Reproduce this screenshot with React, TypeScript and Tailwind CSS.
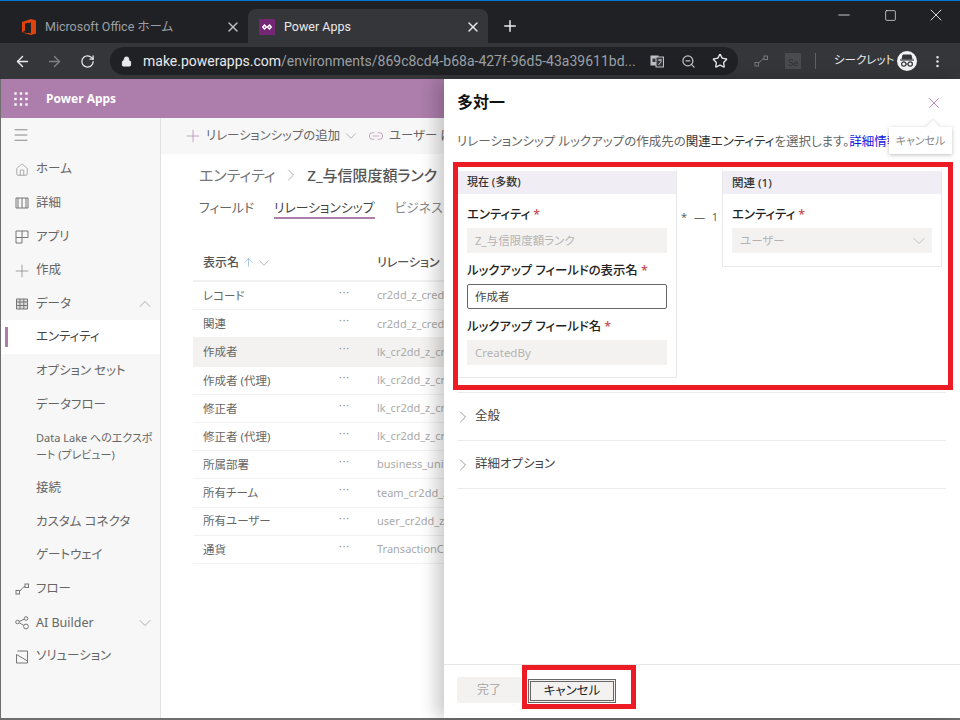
import React from "react"
import { ArrowLeft, ArrowRight, RotateCw, Lock, ZoomOut, Star, Plus, X, Minus, Square, ChevronDown, ChevronUp, ChevronRight, Menu, Home, ArrowUp, Link2, MoreVertical } from "lucide-react"

const sans = "[font-family:'Noto_Sans','Noto_Sans_CJK_JP',sans-serif]"
const chromeFont = "[font-family:Roboto,'Noto_Sans_CJK_JP',sans-serif]"

function Grid9() {
  return (
    <svg width="14" height="14" viewBox="0 0 14 14" fill="#fff">
      {[1.5, 7, 12.5].map((y) =>
        [1.5, 7, 12.5].map((x) => <rect key={`${x}-${y}`} x={x - 1.2} y={y - 1.2} width="2.4" height="2.4" />)
      )}
    </svg>
  )
}

function OfficeLogo() {
  return (
    <svg width="14" height="16" viewBox="0 0 14 16">
      <path d="M0 3 L9 0 L14 1.5 V14.5 L9 16 L0 13.5 L9 14.2 V3.4 L3 4.6 V11.6 L0 13.5 Z" fill="#e0440e" />
    </svg>
  )
}

function PowerAppsLogo() {
  return (
    <div className="flex h-4 w-4 items-center justify-center bg-[#742774]">
      <svg width="10" height="6" viewBox="0 0 10 6" fill="none" stroke="#fff" strokeWidth="1.4">
        <path d="M2.5 1 L4.5 3 L2.5 5 L0.8 3 Z" />
        <path d="M7.5 1 L9.2 3 L7.5 5 L5.5 3 Z" />
      </svg>
    </div>
  )
}

function FlowIcon() {
  return (
    <svg width="14" height="14" viewBox="0 0 14 14" fill="none" stroke="#777" strokeWidth="1">
      <rect x="1" y="8.5" width="3.5" height="3.5" />
      <rect x="10" y="2" width="3.5" height="3.5" />
      <path d="M4.5 9 C7 8 7 5 10 4.5" />
    </svg>
  )
}

function AiIcon() {
  return (
    <svg width="14" height="14" viewBox="0 0 14 14" fill="none" stroke="#777" strokeWidth="1">
      <circle cx="2.5" cy="6" r="1.8" />
      <circle cx="11" cy="2.5" r="1.8" />
      <circle cx="11" cy="10.5" r="2.4" />
      <path d="M4.3 5.4 L9.4 3.2 M4.3 6.8 L8.8 9.4" />
    </svg>
  )
}

function SolutionIcon() {
  return (
    <svg width="14" height="14" viewBox="0 0 14 14" fill="none" stroke="#777" strokeWidth="1">
      <path d="M2.5 1 H12.5 V13 H1.5 V4.5 L12.5 11" />
    </svg>
  )
}

function AppIcon() {
  return (
    <svg width="14" height="14" viewBox="0 0 14 14" fill="none" stroke="#777" strokeWidth="1">
      <path d="M1 1 H13 V7.5 H7 V13 H1 Z M7 1 V7.5 M1 7.5 H7" />
    </svg>
  )
}

function BookIcon() {
  return (
    <svg width="14" height="14" viewBox="0 0 14 14" fill="none" stroke="#777" strokeWidth="1">
      <path d="M1 2 H13 V12 H1 Z M7 2 V12 M3 2 V12 M11 2 V12" />
    </svg>
  )
}

function GridIcon() {
  return (
    <svg width="14" height="14" viewBox="0 0 14 14" fill="#ddd" stroke="#777" strokeWidth="1">
      <path d="M1.5 2 H12.5 V12 H1.5 Z M1.5 5 H12.5 M1.5 8.5 H12.5 M5 2 V12 M8.8 2 V12" />
    </svg>
  )
}

function IncognitoIcon() {
  return (
    <div className="flex h-5 w-5 items-center justify-center rounded-full bg-[#f1f3f4]">
      <svg width="16" height="14" viewBox="0 0 16 14" fill="none" stroke="#35363a">
        <path d="M4 1 H12 L13 5 H3 Z" fill="#35363a" />
        <path d="M1 6 H15" strokeWidth="1.2" />
        <circle cx="4.8" cy="10" r="2.2" strokeWidth="1.2" />
        <circle cx="11.2" cy="10" r="2.2" strokeWidth="1.2" />
        <path d="M7 10 H9" strokeWidth="1.2" />
      </svg>
    </div>
  )
}

function TranslateIcon() {
  return (
    <svg width="14" height="14" viewBox="0 0 14 14">
      <rect x="0.5" y="1.5" width="8" height="10" fill="#bdc1c6" />
      <rect x="6" y="3" width="7.5" height="10" fill="#35363a" stroke="#bdc1c6" />
      <rect x="2.5" y="4.5" width="3" height="3.5" fill="#35363a" />
      <path d="M8 6 H12 M10 5 V7 M8.5 11 L11.5 7" stroke="#bdc1c6" fill="none" />
    </svg>
  )
}

function ChromeBar() {
  return (
    <div className={chromeFont}>
      <div className="flex h-[42px] bg-[#202124] pl-px">
        <div className="flex h-[34px] w-[247px] items-center self-end pt-[2px] pl-[21px] pr-[7px]">
          <OfficeLogo />
          <span className="ml-[9px] flex-1 text-[12.5px] text-[#9aa0a6]">Microsoft Office ホーム</span>
          <X size={16} className="text-[#bdc1c6]" />
        </div>
        <div className="flex h-[34px] w-[240px] items-center self-end rounded-t-lg bg-[#35363a] pt-[2px] pl-[11px] pr-[7px]">
          <PowerAppsLogo />
          <span className="ml-[9px] flex-1 text-[12.5px] text-[#e8eaed]">Power Apps</span>
          <X size={16} className="text-[#e8eaed]" />
        </div>
        <div className="flex h-[34px] w-[44px] items-center justify-center self-end">
          <Plus size={18} className="text-[#e8eaed]" />
        </div>
        <div className="ml-auto flex h-[28px] items-center self-start pr-px text-white">
          <div className="flex w-[46px] justify-center"><Minus size={18} strokeWidth={1} /></div>
          <div className="flex w-[46px] justify-center"><Square size={13} strokeWidth={1.2} /></div>
          <div className="flex w-[46px] justify-center"><X size={20} strokeWidth={1} /></div>
        </div>
      </div>
      <div className="flex h-[36px] items-center bg-[#35363a] pl-[14px]">
        <ArrowLeft size={17} className="text-[#e8eaed]" />
        <ArrowRight size={17} className="ml-[15px] text-[#7d8084]" />
        <RotateCw size={15} className="ml-[17px] text-[#e8eaed]" />
        <div className="ml-[15px] flex h-[28px] w-[628px] items-center rounded-full bg-[#202124] pl-[11px]">
          <Lock size={11} className="fill-[#e8eaed] text-[#e8eaed]" />
          <span className="ml-[11px] w-[488px] whitespace-nowrap text-[14px] text-[#9aa0a6]">
            <span className="text-[#e8eaed]">make.powerapps.com</span>/environments/869c8cd4-b68a-427f-96d5-43a39611bd...
          </span>
          <span className="ml-[19px]"><TranslateIcon /></span>
          <ZoomOut size={15} className="ml-[17px] text-[#bdc1c6]" />
          <Star size={16} className="ml-[16px] text-[#e8eaed]" />
        </div>
        <span className="ml-[16px]"><FlowIcon /></span>
        <div className="ml-[17px] flex h-4 w-4 items-end justify-center bg-[#4a4b4e] text-[9px] leading-[12px] text-[#2f3033]">Se</div>
        <div className="ml-[14px] h-4 w-px bg-[#5f6368]" />
        <span className="ml-[18px] text-[11.5px] text-[#e8eaed]">シークレット</span>
        <span className="ml-[3px]"><IncognitoIcon /></span>
        <MoreVertical size={15} className="ml-[13px] text-[#e8eaed]" />
      </div>
    </div>
  )
}

function NavItem({ icon, label, active, chevron }: { icon?: React.ReactNode; label: string; active?: boolean; chevron?: "up" | "down" }) {
  return (
    <div className={`relative flex h-[33.6px] items-center pl-[14px] pr-[5px] pt-[2px] ${active ? "bg-white text-[#444]" : "text-[#666]"}`}>
      {active && <div className="absolute left-1 top-[7px] h-[20px] w-[3px] bg-[#ad7dab]" />}
      <div className="flex w-[21px] shrink-0 justify-start">{icon}</div>
      <span className="text-[12.5px]">{label}</span>
      {chevron === "up" && <ChevronUp size={20} strokeWidth={0.8} className="ml-auto text-[#888]" />}
      {chevron === "down" && <ChevronDown size={20} strokeWidth={0.8} className="ml-auto text-[#888]" />}
    </div>
  )
}

function Sidebar() {
  return (
    <div className="flex w-[160px] shrink-0 flex-col border-r border-[#e1e1e1] bg-[#f7f7f7]">
      <div className="flex h-[34px] items-center pl-[11px]">
        <Menu size={18} strokeWidth={0.9} className="text-[#555]" />
      </div>
      <NavItem icon={<Home size={14} strokeWidth={1} className="text-[#777]" />} label="ホーム" />
      <NavItem icon={<BookIcon />} label="詳細" />
      <NavItem icon={<AppIcon />} label="アプリ" />
      <NavItem icon={<Plus size={20} strokeWidth={0.8} className="-ml-[3px] text-[#777]" />} label="作成" />
      <NavItem icon={<GridIcon />} label="データ" chevron="up" />
      <NavItem label="エンティティ" active />
      <NavItem label="オプション セット" />
      <NavItem label="データフロー" />
      <div className="whitespace-nowrap py-[8px] pl-[35px] text-[11px] leading-[17px] text-[#666]">
        Data Lake へのエクスポ<br />ート (プレビュー)
      </div>
      <NavItem label="接続" />
      <NavItem label="カスタム コネクタ" />
      <NavItem label="ゲートウェイ" />
      <NavItem icon={<FlowIcon />} label="フロー" />
      <NavItem icon={<AiIcon />} label="AI Builder" chevron="down" />
      <NavItem icon={<SolutionIcon />} label="ソリューション" />
    </div>
  )
}

const rows = [
  ["レコード", "cr2dd_z_credi"],
  ["関連", "cr2dd_z_credi"],
  ["作成者", "lk_cr2dd_z_cre"],
  ["作成者 (代理)", "lk_cr2dd_z_cre"],
  ["修正者", "lk_cr2dd_z_cre"],
  ["修正者 (代理)", "lk_cr2dd_z_cre"],
  ["所属部署", "business_unit_"],
  ["所有チーム", "team_cr2dd_z_"],
  ["所有ユーザー", "user_cr2dd_z_"],
  ["通貨", "TransactionCu"],
]

function Main() {
  return (
    <div className="min-w-0 flex-1 overflow-hidden">
      <div className="flex h-[36px] items-center whitespace-nowrap bg-[#f7f7f7] pl-[22px] text-[12.4px] text-[#666]">
        <Plus size={20} strokeWidth={0.8} className="text-[#ad7dab]" />
        <span className="ml-[3px]">リレーションシップの追加</span>
        <ChevronDown size={18} strokeWidth={0.8} className="ml-[2px] text-[#888]" />
        <Link2 size={16} strokeWidth={1} className="ml-[8px] text-[#ad7dab]" />
        <span className="ml-[5px]">ユーザー に</span>
      </div>
      <div className="flex items-center whitespace-nowrap pl-[38px] pt-[10px] text-[15px] leading-[22px]">
        <span className="text-[#777]">エンティティ</span>
        <ChevronRight size={20} strokeWidth={0.8} className="mx-[6px] text-[#888]" />
        <span className="font-medium text-[#555]">Z_与信限度額ランク</span>
      </div>
      <div className="mt-[11px] flex h-[22px] whitespace-nowrap pl-[38px] pt-px text-[12.8px] leading-[19px] text-[#666]">
        <span>フィールド</span>
        <span className="ml-[20px] h-[21px] border-b-2 border-[#ad7dab] text-[#444]">リレーションシップ</span>
        <span className="ml-[20px] text-[#888]">ビジネス ル</span>
      </div>
      <div className="ml-[32px] mt-[33px] flex h-[30px] items-center whitespace-nowrap border-b-2 border-[#f1f1f1] pb-[7px] text-[12px] font-medium text-[#555]">
        <span className="ml-[10px]">表示名</span>
        <ArrowUp size={13} strokeWidth={1} className="ml-[3px] text-[#6a9bc4]" />
        <ChevronDown size={18} strokeWidth={0.8} className="text-[#888]" />
        <span className="ml-[104px]">リレーション</span>
      </div>
      <div className="ml-[32px]">
        {rows.map(([name, schema]) => (
          <div
            key={name}
            className={`flex h-[28.2px] items-center overflow-hidden whitespace-nowrap border-b border-[#f1f1f1] text-[11.5px] text-[#666] ${name === "作成者" ? "bg-[#f3f2f1]" : ""}`}
          >
            <span className="ml-[10px] w-[136px] shrink-0">{name}</span>
            <span className="mb-[6px] w-[38px] shrink-0 text-[10px] tracking-[1px] text-[#888]">···</span>
            <span className="text-[11px] text-[#aaa]">{schema}</span>
          </div>
        ))}
      </div>
    </div>
  )
}

function Req({ children }: { children: string }) {
  return (
    <div className="whitespace-nowrap text-[12.4px] font-medium leading-[18px] text-[#222]">
      {children} <span className="text-[#c4484f]">*</span>
    </div>
  )
}

function ReadOnly({ children, chevron }: { children: string; chevron?: boolean }) {
  return (
    <div className="flex h-[25px] items-center justify-between bg-[#f3f2f1] pl-2 pr-[3px] text-[11.5px] text-[#b5b3b1]">
      {children}
      {chevron && <ChevronDown size={20} strokeWidth={0.8} className="text-[#a8a6a4]" />}
    </div>
  )
}

function Panel() {
  return (
    <div className="absolute inset-y-0 right-0 flex w-[516px] flex-col bg-white shadow-[-8px_0_16px_rgba(0,0,0,0.2)]">
      <div className="flex h-[45px] items-center justify-between pl-[13px] pr-[17px]">
        <span className="text-[16px] font-bold text-[#111]">多対一</span>
        <X size={18} strokeWidth={0.9} className="mt-[3px] text-[#a04f9e]" />
      </div>
      <div className="whitespace-nowrap pl-[13px] pt-[9px] text-[12.5px] leading-[18px] text-[#666]">
        リレーションシップ ルックアップの作成先の<span className="text-[#333]">関連エンティティ</span>を選択します。<span className="text-[#1515e0]">詳細情報</span>
      </div>
      <div className="absolute right-[8px] top-[48px] h-[27px] w-[63px] bg-white text-center text-[11px] leading-[27px] text-[#8a8886] shadow-[0_1px_4px_rgba(0,0,0,0.25)]">
        <div className="absolute -top-[5px] left-[39px] h-[10px] w-[10px] rotate-45 bg-white shadow-[-1px_-1px_2px_rgba(0,0,0,0.1)]" />
        <span className="relative">キャンセル</span>
      </div>

      <div className="ml-[9px] mt-[11px] flex h-[228px] w-[500px] border-[5px] border-[#ed1c24]">
        <div className="mt-[4px] h-[207px] w-[219px] border-b border-r border-[#e8e8e8]">
          <div className="flex h-[23px] items-center bg-[#f1edf4] pl-[9px] text-[11px] font-medium text-[#333]">現在 (多数)</div>
          <div className="px-[9px] pt-[12px]">
            <Req>エンティティ</Req>
            <div className="mt-[4px]"><ReadOnly>Z_与信限度額ランク</ReadOnly></div>
            <div className="mt-[9px]"><Req>ルックアップ フィールドの表示名</Req></div>
            <div className="mt-[4px] flex h-[25px] items-center rounded-[2px] border border-[#666] px-[7px] text-[11.5px] text-[#444]">作成者</div>
            <div className="mt-[9px]"><Req>ルックアップ フィールド名</Req></div>
            <div className="mt-[4px]"><ReadOnly>CreatedBy</ReadOnly></div>
          </div>
        </div>
        <div className="flex h-[66px] w-[45px] items-end justify-between whitespace-nowrap px-[4px] pb-[8px] text-[11px] text-[#666]">
          <span>*</span>
          <span>—</span>
          <span>1</span>
        </div>
        <div className="mt-[4px] h-[96px] w-[220px] border-x border-b border-[#e8e8e8]">
          <div className="flex h-[23px] items-center bg-[#f1edf4] pl-[9px] text-[11.5px] font-medium text-[#333]">関連 (1)</div>
          <div className="px-[9px] pt-[12px]">
            <Req>エンティティ</Req>
            <div className="mt-[4px]"><ReadOnly chevron>ユーザー</ReadOnly></div>
          </div>
        </div>
      </div>

      <div className="ml-[13px] mr-[14px] mt-[2px] border-b border-[#ebebeb]">
        {["全般", "詳細オプション"].map((title) => (
          <div key={title} className="flex h-[48px] items-center border-t border-[#ebebeb] text-[12.5px] text-[#444]">
            <ChevronRight size={20} strokeWidth={0.8} className="-ml-[4px] text-[#666]" />
            <span className="ml-[2px]">{title}</span>
          </div>
        ))}
      </div>

      <div className="mt-auto flex h-[54px] shrink-0 items-start border-t border-[#e6e6e6] pl-[13px] pt-[12px]">
        <div className="flex h-[26px] w-[64px] items-center justify-center rounded-[2px] bg-[#f3f2f1] text-[12px] text-[#a6a6a6]">完了</div>
        <div className="relative ml-[1px] -mt-[12px] h-[44px] w-[114px] border-[5px] border-[#ed1c24]">
          <div className="absolute left-[1px] top-[9px] flex h-[24px] w-[88px] items-center justify-center border-[3px] border-double border-[#666] bg-[#f3f2f1] text-[12.5px] text-[#222]">キャンセル</div>
        </div>
      </div>
    </div>
  )
}

export default function App() {
  return (
    <div className={`flex h-[720px] w-[960px] flex-col overflow-hidden border-t border-[#0078d7] [font-feature-settings:'palt'] ${sans}`}>
      <ChromeBar />
      <div className="relative flex min-h-0 flex-1 flex-col border-b-2 border-l border-[#6e6e6e]">
        <div className="flex h-[39px] shrink-0 items-center bg-[#ad7dab] pl-[13px] pt-px text-[12px] font-bold text-white">
          <Grid9 />
          <span className="ml-[18px]">Power Apps</span>
        </div>
        <div className="flex min-h-0 flex-1">
          <Sidebar />
          <Main />
        </div>
        <Panel />
      </div>
    </div>
  )
}
